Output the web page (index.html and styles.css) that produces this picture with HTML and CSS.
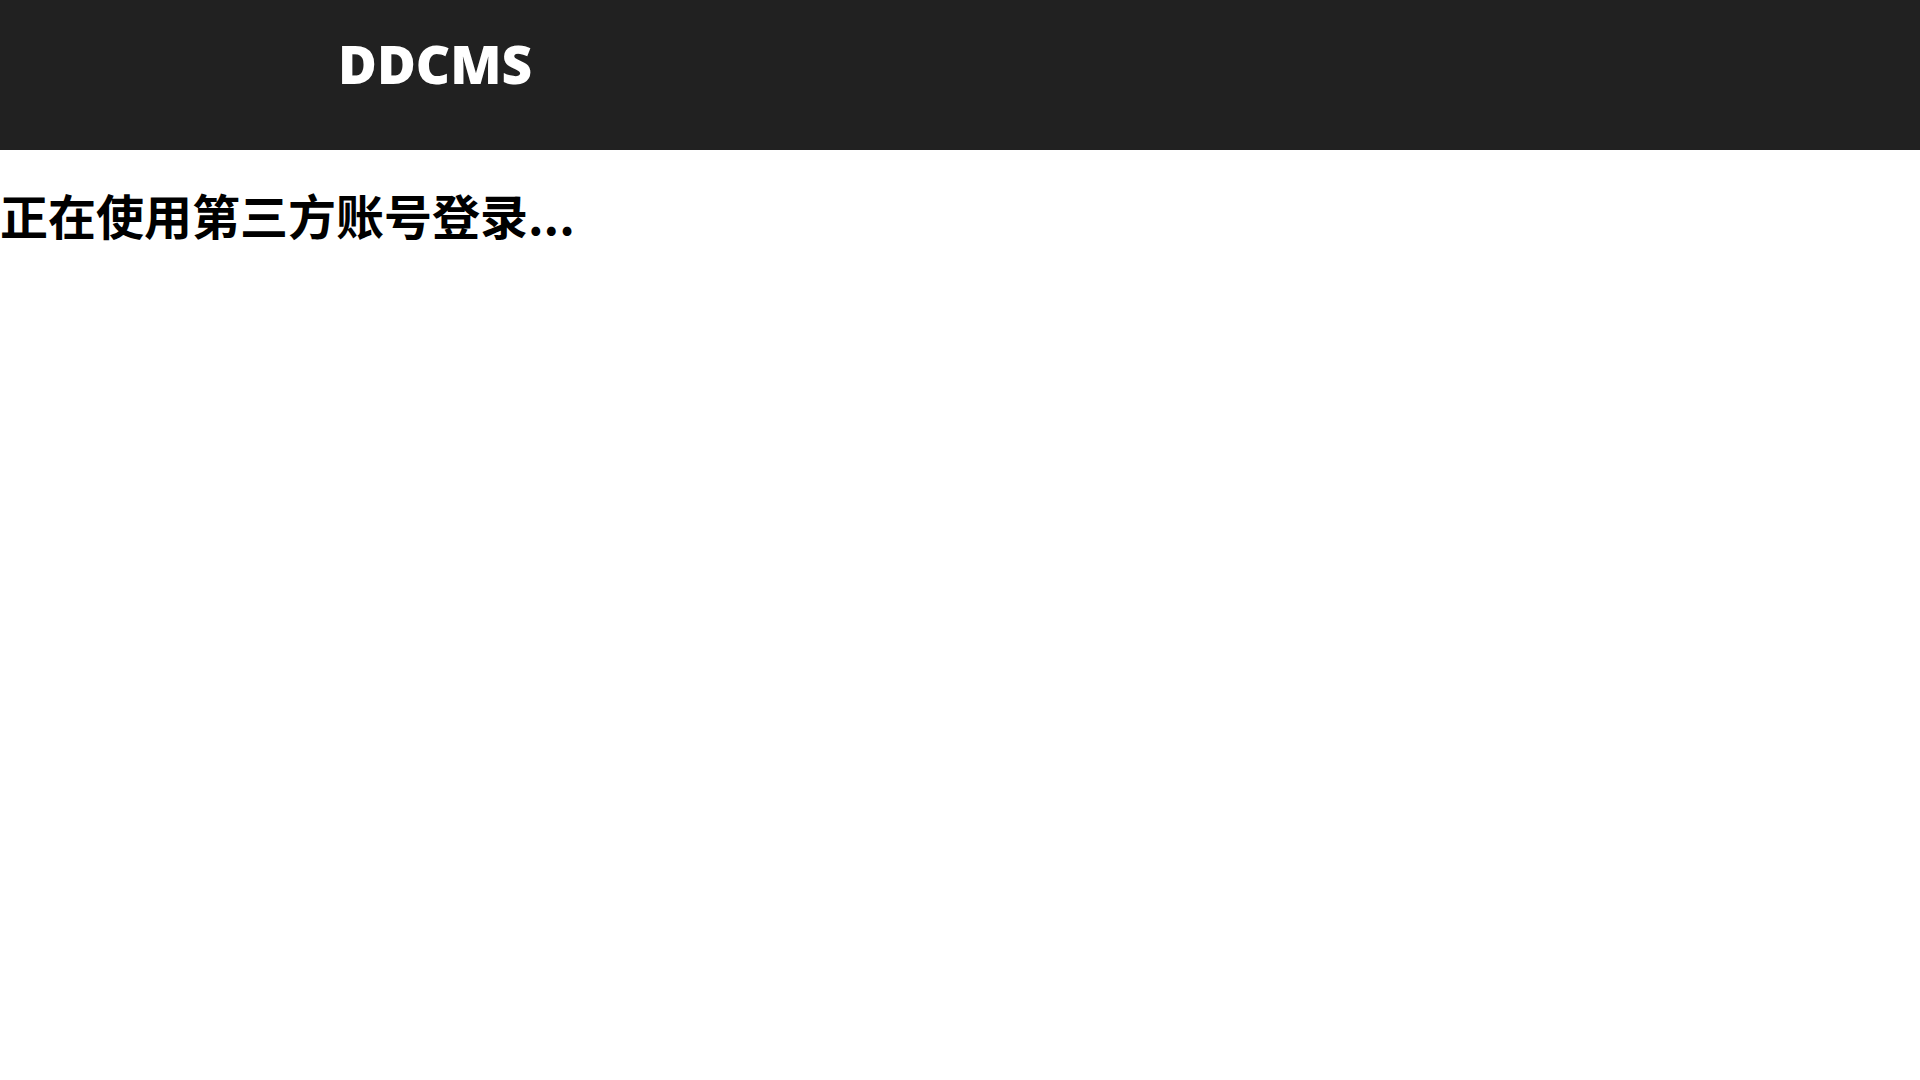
FILE: index.html
```html
<!DOCTYPE html>
<html lang="zh-CN">
<head>
<meta charset="utf-8">
<title>DDCMS</title>
<link rel="stylesheet" href="styles.css">
</head>
<body>
<header class="topbar">
  <div class="brand">DDCMS</div>
</header>
<h1 class="status">正在使用第三方账号登录...</h1>
</body>
</html>
```
FILE: styles.css
```css
html, body {
  margin: 0;
  padding: 0;
  background: #ffffff;
}
body {
  font-family: "Open Sans", "Noto Sans CJK SC", sans-serif;
}
.topbar {
  height: 150px;
  background: #212121;
  box-sizing: border-box;
  padding: 29px 0 0 338px;
}
.brand {
  color: #ffffff;
  font-family: "Open Sans", sans-serif;
  font-weight: 800;
  font-size: 53px;
  line-height: 70px;
  letter-spacing: 0;
}
.status {
  margin: 32px 0 0 0;
  font-family: "Noto Sans CJK SC", sans-serif;
  font-weight: 700;
  font-size: 48px;
  line-height: 64px;
  color: #000000;
}
```
